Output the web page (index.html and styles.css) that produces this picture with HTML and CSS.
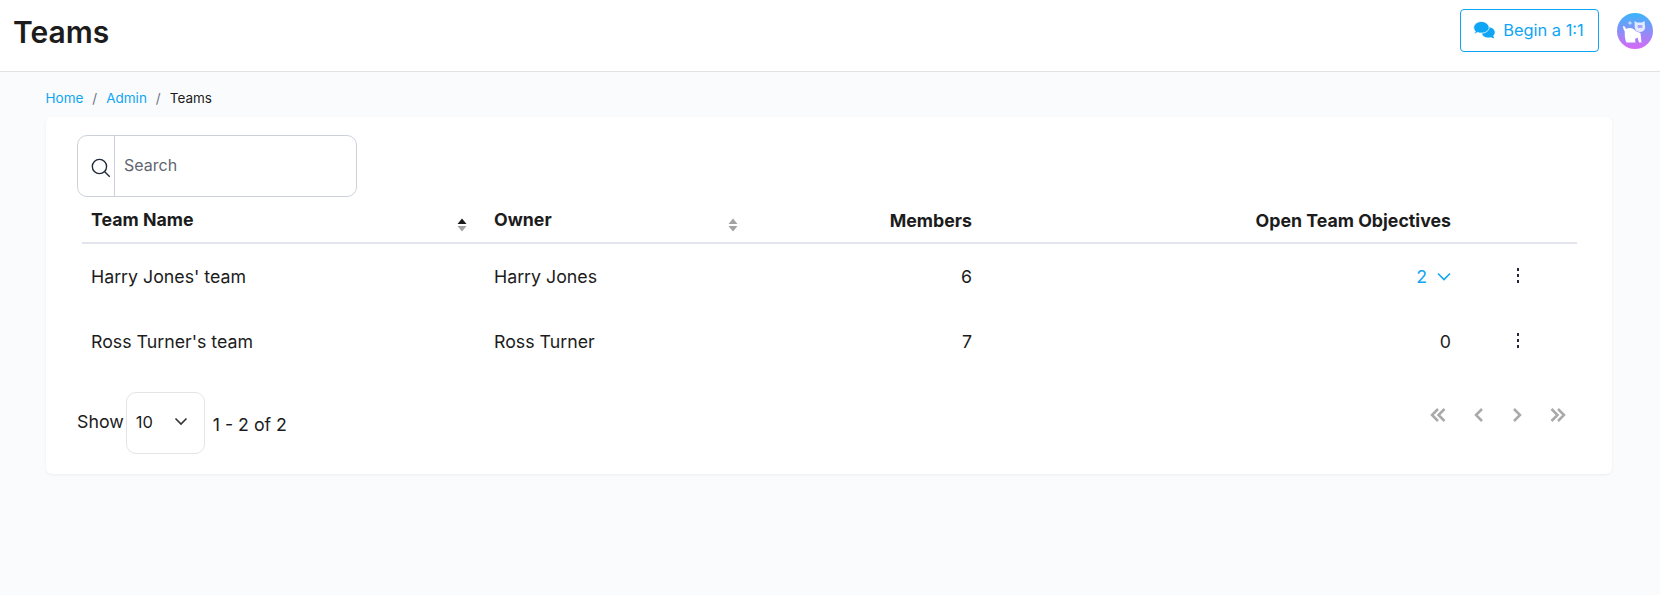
FILE: index.html
```html
<!DOCTYPE html>
<html>
<head>
  <meta charset="UTF-8">
  <title>Teams</title>
  <link rel="stylesheet" href="styles.css">
</head>
<body>
  <header class="topbar">
    <h1 class="page-title">Teams</h1>
    <div class="topbar-actions">
      <button class="begin-button">
        <svg width="22" height="18" viewBox="-.5 -.5 21 17.500">
          <path fill="#0ea5f5" d="M14.200 5.500c3.500 0 6.300 2.200 6.300 5 0 1.300-.6 2.500-1.600 3.400 .2 .9 .7 1.700 1.300 2.400-1.300 0-2.500-.4-3.400-1.100-.8 .3-1.700 .4-2.600 .4-3.500 0-6.300-2.200-6.300-5s2.800-4.700 6.300-4.700z"/>
          <path fill="#0ea5f5" stroke="#fff" stroke-width=".8" d="M7.500 0C3.400 0 0 2.600 0 5.900c0 1.400 .6 2.600 1.600 3.600-.3 .9-.9 1.700-1.500 2.300 1.400 0 2.600-.5 3.500-1.200 1.200 .5 2.500 .7 3.900 .7 4.100 0 7.500-2.500 7.500-5.400S11.600 0 7.500 0z"/>
        </svg>
        <span>Begin a 1:1</span>
      </button>
      <svg class="avatar" width="36" height="36" viewBox="0 0 36 36">
        <defs>
          <linearGradient id="avatarFill" x1="0" y1="0" x2="0" y2="1">
            <stop offset="0" stop-color="#38b6fb"/>
            <stop offset="1" stop-color="#d968f5"/>
          </linearGradient>
        </defs>
        <circle cx="18" cy="18" r="18" fill="url(#avatarFill)"/>
        <path fill="#fff" d="M6 13c1.800 .3 2.800 1.400 3 3 2-1.300 5-1.300 7.500 0l3 2.500 4 1.500 1 9.500h-2.500l-1.500-5-2.500 1.500 .5 3.500H9.500C8 27 7.500 22 7.800 18.500 6.800 17 6 15 6 13z"/>
        <path fill="#fff" fill-opacity=".8" d="M17.500 8l2.600 1.600h4.800L27.500 8l.7 6.500c-.5 3-2.700 4.500-5.200 4.500s-4.900-1.500-5.300-4.500z"/>
        <rect x="20.500" y="12" width="5" height="3" rx="1.200" fill="#a6a4f8"/>
        <path fill="#fff" fill-opacity=".7" d="M13 7.500l.7 1.800 1.800 .7-1.800 .7-.7 1.800-.7-1.800-1.800-.7 1.800-.7z"/>
      </svg>
    </div>
  </header>

  <main class="content">
    <nav class="breadcrumb">
      <a href="#">Home</a><span class="sep">/</span><a href="#">Admin</a><span class="sep">/</span><span>Teams</span>
    </nav>

    <section class="card">
      <div class="search">
        <span class="search-icon">
          <svg width="21" height="21" viewBox="0 0 20 20" fill="none" stroke="#1f2937" stroke-width="1.300"><circle cx="9" cy="9" r="6.800"/><path d="M13.800 13.800l5 5"/></svg>
        </span>
        <input class="search-input" type="text" placeholder="Search">
      </div>

      <table class="teams-table">
        <colgroup>
          <col class="col-name"><col class="col-owner"><col class="col-members"><col class="col-objectives"><col class="col-menu">
        </colgroup>
        <thead>
          <tr>
            <th><div class="sort-head">Team Name
              <svg class="sort-icon" width="10" height="14" viewBox="0 0 10 14"><path fill="#1c1c1c" d="M5 .5l4.500 5.500h-9z"/><path fill="#a3a3a3" d="M5 13.500L.5 8h9z"/></svg>
            </div></th>
            <th><div class="sort-head">Owner
              <svg class="sort-icon" width="10" height="14" viewBox="0 0 10 14"><path fill="#a3a3a3" d="M5 .5l4.500 5.500h-9z"/><path fill="#a3a3a3" d="M5 13.500L.5 8h9z"/></svg>
            </div></th>
            <th class="num">Members</th>
            <th class="num">Open Team Objectives</th>
            <th></th>
          </tr>
        </thead>
        <tbody>
          <tr>
            <td>Harry Jones' team</td>
            <td>Harry Jones</td>
            <td class="num">6</td>
            <td class="num"><a class="objectives-link" href="#">2
              <svg width="14" height="9" viewBox="0 0 14 9" fill="none" stroke="#0ea5f5" stroke-width="1.600"><path d="M1 1.500l6 6 6-6"/></svg>
            </a></td>
            <td class="menu-cell"><span class="dots"><i></i><i></i><i></i></span></td>
          </tr>
          <tr>
            <td>Ross Turner's team</td>
            <td>Ross Turner</td>
            <td class="num">7</td>
            <td class="num">0</td>
            <td class="menu-cell"><span class="dots"><i></i><i></i><i></i></span></td>
          </tr>
        </tbody>
      </table>

      <div class="table-footer">
        <div class="page-size">
          <span class="show-label">Show</span>
          <div class="select-box">
            <span>10</span>
            <svg width="14" height="9" viewBox="0 0 14 9" fill="none" stroke="#333" stroke-width="1.600"><path d="M1.500 1.500L7 7l5.500-5.500"/></svg>
          </div>
          <span class="range">1 - 2 of 2</span>
        </div>
        <div class="pager">
          <svg width="16" height="14" viewBox="0 0 16 14"><path d="M8 1L2 7l6 6M14.500 1l-6 6 6 6"/></svg>
          <svg width="10" height="14" viewBox="0 0 10 14"><path d="M8 1L2 7l6 6"/></svg>
          <svg width="10" height="14" viewBox="0 0 10 14"><path d="M2 1l6 6-6 6"/></svg>
          <svg width="16" height="14" viewBox="0 0 16 14"><path d="M1.500 1l6 6-6 6M8 1l6 6-6 6"/></svg>
        </div>
      </div>
    </section>
  </main>
</body>
</html>
```

FILE: styles.css
```css
* {
  box-sizing: border-box;
}
body {
  margin: 0;
  min-height: 595px;
  background: #fafbfd;
  color: #1c1c1c;
  font-family: Inter, "Noto Sans", sans-serif;
  font-size: 17.750px;
}
a {
  color: #0ea5f5;
  text-decoration: none;
}
.topbar {
  display: flex;
  justify-content: space-between;
  align-items: center;
  height: 72px;
  padding: 0 7px 0 13px;
  background: #fff;
  border-bottom: 1px solid #e2e2e4;
}
.page-title {
  margin: 0 0 7px;
  font-size: 30px;
  font-weight: 600;
}
.topbar-actions {
  display: flex;
  align-items: center;
  gap: 18px;
  margin-bottom: 17px;
}
.begin-button {
  display: flex;
  align-items: center;
  justify-content: center;
  gap: 8px;
  width: 139px;
  height: 43px;
  margin-top: 7px;
  padding: 0 2px 2px 0;
  background: #fff;
  color: #0ea5f5;
  border: 1px solid #0ea5f5;
  border-radius: 4px;
  font-family: inherit;
  font-size: 16.400px;
}
.avatar {
  margin-top: 8px;
}
.content {
  padding: 17px 48px 0 45.500px;
}
.breadcrumb {
  display: flex;
  height: 17px;
  align-items: center;
  font-size: 13.500px;
}
.breadcrumb .sep {
  margin: 0 9px;
  color: #6b7280;
}
.card {
  height: 357px;
  margin: 11px 0 0 .5px;
  padding: 18px 31px;
  background: #fff;
  border-radius: 6px;
  box-shadow: 0 1px 3px rgba(0,0,0,0.06);
}
.search {
  display: flex;
  width: 280px;
  height: 62px;
  border: 1px solid #cdd2da;
  border-radius: 10px;
}
.search-icon {
  display: flex;
  align-items: center;
  justify-content: flex-end;
  width: 37px;
  padding: 2px 3px 0 0;
  border-right: 1px solid #cdd2da;
}
.search-input {
  flex: 1;
  min-width: 0;
  padding: 0 9px 2px;
  background: none;
  border: none;
  outline: none;
  font-family: inherit;
  font-size: 16px;
}
.search-input::placeholder {
  color: #5f6670;
  opacity: 1;
}
.teams-table {
  width: 1495px;
  margin: 0 0 0 5px;
  border-collapse: collapse;
  table-layout: fixed;
}
.col-name { width: 403px; }
.col-owner { width: 270px; }
.col-members { width: 226px; }
.col-objectives { width: 479px; }
.col-menu { width: 117px; }
.teams-table th {
  height: 46px;
  padding: 1px 9px 0;
  border-bottom: 2px solid #e2e5ec;
  font-weight: 700;
  text-align: left;
}
.sort-head {
  display: flex;
  justify-content: space-between;
  padding-right: 9px;
}
.sort-icon {
  margin: 9px 0 0;
  flex: none;
}
.teams-table th:nth-child(2) .sort-icon {
  transform: translateX(1px);
}
.teams-table td {
  height: 65px;
  padding: 2px 9px 0;
}
.teams-table tbody tr:first-child td {
  padding-top: 1px;
}
.teams-table th.num,
.teams-table td.num {
  text-align: right;
}
.objectives-link svg {
  margin-left: 5px;
  vertical-align: 2px;
}
.teams-table tbody td.menu-cell {
  padding-left: 57px;
}
.dots {
  display: flex;
  flex-direction: column;
  gap: 3px;
  margin-top: -3px;
}
.dots i {
  display: block;
  width: 2px;
  height: 3px;
  background: #1f2937;
}
.table-footer {
  display: flex;
  justify-content: space-between;
  margin-top: 19px;
}
.page-size {
  display: flex;
  align-items: center;
}
.show-label {
  margin: -3px 2px 0 0;
}
.select-box {
  display: flex;
  align-items: center;
  justify-content: space-between;
  width: 79px;
  height: 62px;
  padding: 0 16px 0 9px;
  border: 1px solid #e4e4e7;
  border-radius: 10px;
  font-size: 16.500px;
}
.select-box span,
.select-box svg {
  margin-top: -3px;
}
.range {
  margin-left: 8px;
  margin-top: 3px;
}
.pager {
  display: flex;
  align-items: center;
  gap: 28px;
  height: 46px;
  padding-right: 15px;
}
.pager svg {
  fill: none;
  stroke: #a9a9a9;
  stroke-width: 2.500;
}
```
